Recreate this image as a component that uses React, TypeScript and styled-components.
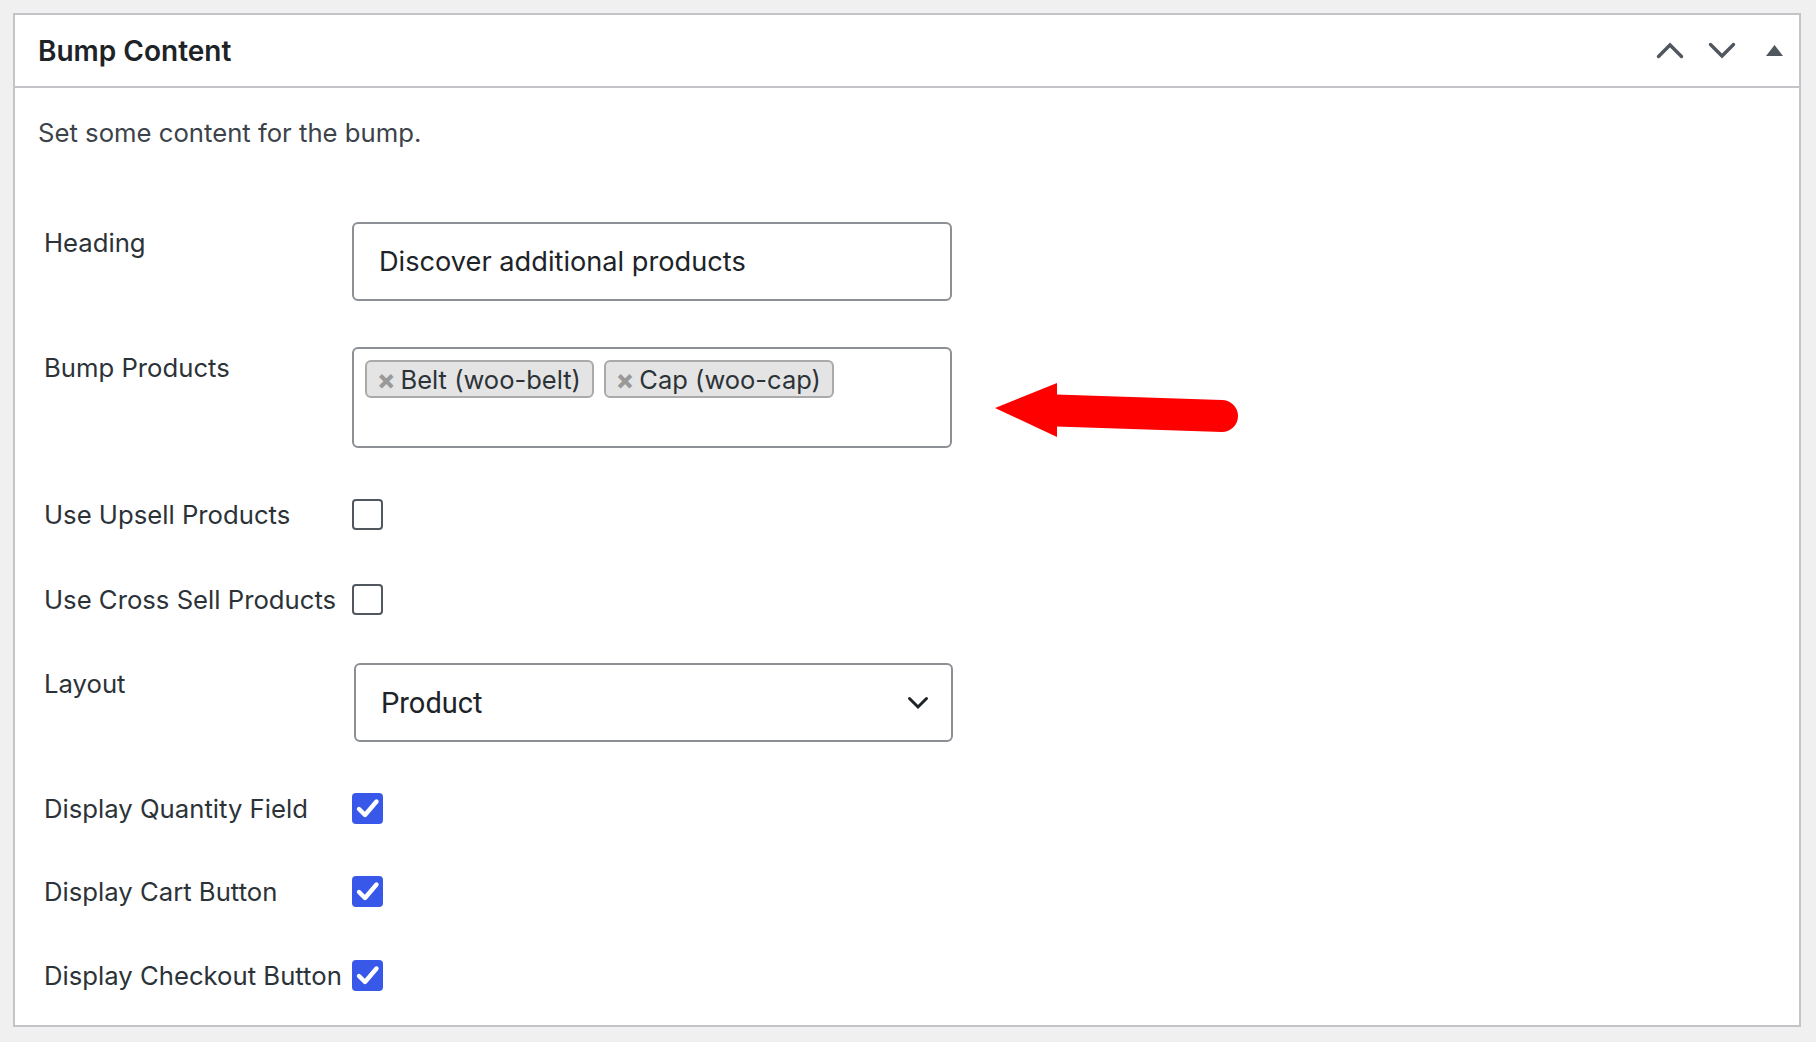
import React from 'react'
import styled, { createGlobalStyle } from 'styled-components'

const GlobalStyle = createGlobalStyle`
  html, body {
    margin: 0;
    padding: 0;
    background: #f0f0f1;
  }
  body {
    font-family: Inter, 'Noto Sans', sans-serif;
    color: #1d2327;
  }
`

type CheckRow = { label: string; checked: boolean; gap: number }

const upsellRows: CheckRow[] = [
  { label: 'Use Upsell Products', checked: false, gap: 51 },
  { label: 'Use Cross Sell Products', checked: false, gap: 54 },
]

const displayRows: CheckRow[] = [
  { label: 'Display Quantity Field', checked: true, gap: 51 },
  { label: 'Display Cart Button', checked: true, gap: 52 },
  { label: 'Display Checkout Button', checked: true, gap: 53 },
]

const tags = ['Belt (woo-belt)', 'Cap (woo-cap)']

const ChevronIcon = ({ up }: { up?: boolean }) => (
  <svg width='28' height='17' viewBox='0 0 28 17'>
    <path
      d={up ? 'M2.5 14.5 L14 3 L25.5 14.5' : 'M2.5 2.5 L14 14 L25.5 2.5'}
      fill='none'
      stroke='#50575e'
      strokeWidth='3.4'
      strokeLinecap='round'
      strokeLinejoin='miter'
    />
  </svg>
)

const TriangleIcon = () => (
  <svg width='17' height='11' viewBox='0 0 17 11'>
    <path d='M8.5 0 L17 11 L0 11 Z' fill='#50575e' />
  </svg>
)

const CheckMark = () => (
  <svg width='31' height='31' viewBox='0 0 31 31'>
    <path
      d='M7 16 L13 22 L24.5 8.5'
      fill='none'
      stroke='#fff'
      strokeWidth='4.4'
      strokeLinecap='round'
      strokeLinejoin='round'
    />
  </svg>
)

const RedArrow = () => (
  <svg width='246' height='60' viewBox='0 0 246 60'>
    <path d='M1 28 L63 3 L63 57 Z' fill='#ff0000' />
    <path d='M62 14.5 L228 20 A16 16 0 0 1 228 52 L62 46.5 Z' fill='#ff0000' />
  </svg>
)

const SelectChevron = () => (
  <svg width='22' height='14' viewBox='0 0 22 14'>
    <path
      d='M2.5 2.5 L11 11 L19.5 2.5'
      fill='none'
      stroke='#1d2327'
      strokeWidth='3'
      strokeLinecap='round'
    />
  </svg>
)

const App = () => {
  return (
    <Page>
      <GlobalStyle />
      <Panel>
        <Header>
          <Title>Bump Content</Title>
          <HeaderActions>
            <IconButton $gap={0}>
              <ChevronIcon up />
            </IconButton>
            <IconButton $gap={24}>
              <ChevronIcon />
            </IconButton>
            <IconButton $gap={30}>
              <TriangleIcon />
            </IconButton>
          </HeaderActions>
        </Header>
        <Body>
          <Description>Set some content for the bump.</Description>
          <Form>
            <Row $gap={71}>
              <Label $top={5}>Heading</Label>
              <TextInput readOnly value='Discover additional products' />
            </Row>
            <Row $gap={46}>
              <Label $top={5}>Bump Products</Label>
              <TagBox>
                {tags.map(tag => (
                  <Tag key={tag}>
                    <TagRemove>×</TagRemove>
                    {tag}
                  </Tag>
                ))}
              </TagBox>
              <ArrowHolder>
                <RedArrow />
              </ArrowHolder>
            </Row>
            {upsellRows.map(row => (
              <Row key={row.label} $gap={row.gap} $center>
                <Label>{row.label}</Label>
                <Checkbox $checked={row.checked}>
                  {row.checked && <CheckMark />}
                </Checkbox>
              </Row>
            ))}
            <Row $gap={48}>
              <Label $top={5}>Layout</Label>
              <SelectBox>
                <span>Product</span>
                <SelectChevron />
              </SelectBox>
            </Row>
            {displayRows.map(row => (
              <Row key={row.label} $gap={row.gap} $center>
                <Label>{row.label}</Label>
                <Checkbox $checked={row.checked}>
                  {row.checked && <CheckMark />}
                </Checkbox>
              </Row>
            ))}
          </Form>
        </Body>
      </Panel>
    </Page>
  )
}

const Page = styled.div`
  padding: 13px 15px 14px 13px;
`

const Panel = styled.div`
  background: #fff;
  border: 2px solid #c3c4c7;
`

const Header = styled.div`
  height: 71px;
  display: flex;
  align-items: center;
  justify-content: space-between;
  padding: 0 16px 0 23px;
  border-bottom: 2px solid #c3c4c7;
`

const Title = styled.h2`
  margin: 0;
  font-size: 28px;
  font-weight: 600;
  color: #1d2327;
`

const HeaderActions = styled.div`
  display: flex;
  align-items: center;
`

const IconButton = styled.div<{ $gap: number }>`
  display: flex;
  align-items: center;
  margin-left: ${p => p.$gap}px;
`

const Body = styled.div`
  padding: 27px 23px 34px;
`

const Description = styled.p`
  margin: 0;
  font-size: 25.7px;
  line-height: 36px;
  color: #3c434a;
`

const Form = styled.div`
  padding-left: 6px;
`

const Row = styled.div<{ $gap: number; $center?: boolean }>`
  display: flex;
  align-items: ${p => (p.$center ? 'center' : 'flex-start')};
  margin-top: ${p => p.$gap}px;
`

const Label = styled.div<{ $top?: number }>`
  width: 308px;
  flex-shrink: 0;
  padding-top: ${p => p.$top ?? 0}px;
  font-size: 25.7px;
  line-height: 31px;
  color: #2c3338;
  white-space: nowrap;
`

const TextInput = styled.input`
  box-sizing: border-box;
  width: 600px;
  height: 79px;
  margin: 0;
  padding: 0 25px;
  border: 2px solid #8c8f94;
  border-radius: 6px;
  background: #fff;
  font-family: Inter, 'Noto Sans', sans-serif;
  font-size: 27.2px;
  color: #1d2327;
  outline: none;
`

const TagBox = styled.div`
  box-sizing: border-box;
  width: 600px;
  height: 101px;
  padding: 11px;
  display: flex;
  align-items: flex-start;
  gap: 10px;
  border: 2px solid #8c8f94;
  border-radius: 6px;
`

const Tag = styled.div`
  box-sizing: border-box;
  height: 38px;
  display: inline-flex;
  align-items: center;
  gap: 5px;
  padding: 0 11px 0 10px;
  background: #e4e4e4;
  border: 2px solid #aaaaaa;
  border-radius: 6px;
  font-size: 25.5px;
  color: #2c3338;
`

const TagRemove = styled.span`
  font-size: 27px;
  font-weight: 800;
  color: #999;
  line-height: 1;
`

const ArrowHolder = styled.div`
  margin: 33px 0 0 42px;
  display: flex;
`

const Checkbox = styled.div<{ $checked: boolean }>`
  box-sizing: border-box;
  width: 31px;
  height: 31px;
  flex-shrink: 0;
  display: flex;
  align-items: center;
  justify-content: center;
  border: ${p => (p.$checked ? 'none' : '2px solid #50575e')};
  border-radius: 4px;
  background: ${p => (p.$checked ? '#3858e9' : '#fff')};
`

const SelectBox = styled.div`
  box-sizing: border-box;
  width: 599px;
  height: 79px;
  margin-left: 2px;
  display: flex;
  align-items: center;
  justify-content: space-between;
  padding: 0 22px 0 25px;
  border: 2px solid #8c8f94;
  border-radius: 6px;
  font-family: Roboto, 'Liberation Sans', sans-serif;
  font-size: 29px;
  color: #1d2327;
`

export default App
